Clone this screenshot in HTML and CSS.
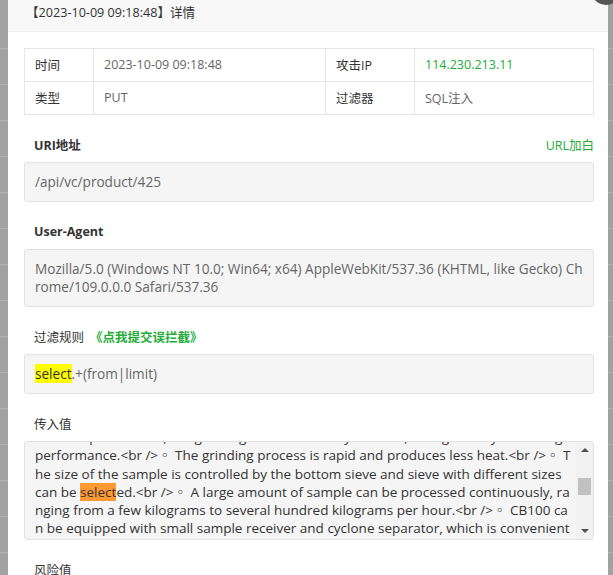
FILE: index.html
```html
<!DOCTYPE html>
<html lang="zh-CN">
<head>
    <meta charset="UTF-8">
    <title>拦截详情</title>
    <link rel="stylesheet" href="styles.css">
</head>
<body>
    <div class="layer">
        <span class="layer-close"></span>
        <div class="layer-title">【2023-10-09 09:18:48】详情</div>
        <div class="layer-content">
            <table class="info-table">
                <colgroup>
                    <col class="c1">
                    <col class="c2">
                    <col class="c3">
                    <col>
                </colgroup>
                <tr>
                    <td class="label">时间</td>
                    <td>2023-10-09 09:18:48</td>
                    <td class="label">攻击IP</td>
                    <td class="green">114.230.213.11</td>
                </tr>
                <tr>
                    <td class="label">类型</td>
                    <td>PUT</td>
                    <td class="label">过滤器</td>
                    <td>SQL注入</td>
                </tr>
            </table>

            <div class="field">
                <div class="field-label">
                    <b>URI地址</b>
                    <a class="green" href="#">URL加白</a>
                </div>
                <div class="field-box">/api/vc/product/425</div>
            </div>

            <div class="field">
                <div class="field-label"><b>User-Agent</b></div>
                <div class="field-box">Mozilla/5.0 (Windows NT 10.0; Win64; x64) AppleWebKit/537.36 (KHTML, like Gecko) Chrome/109.0.0.0 Safari/537.36</div>
            </div>

            <div class="field">
                <div class="field-label">
                    <span>过滤规则</span>
                    <a class="green strong" href="#">《点我提交误拦截》</a>
                </div>
                <div class="field-box"><span class="hl-yellow">select</span>.+(from|limit)</div>
            </div>

            <div class="field">
                <div class="field-label"><span>传入值</span></div>
                <div class="field-box scroll-box">
                    <div class="scroll-view">
                        <div class="scroll-text">
                            <div>uniform particle size, the grinding chamber is easy to clean, with good dry and wet grinding qualit</div>
                            <div>performance.&lt;br /&gt;◦ The grinding process is rapid and produces less heat.&lt;br /&gt;◦ T</div>
                            <div>he size of the sample is controlled by the bottom sieve and sieve with different sizes</div>
                            <div>can be <span class="hl-orange">select</span>ed.&lt;br /&gt;◦ A large amount of sample can be processed continuously, ra</div>
                            <div>nging from a few kilograms to several hundred kilograms per hour.&lt;br /&gt;◦ CB100 ca</div>
                            <div>n be equipped with small sample receiver and cyclone separator, which is convenient</div>
                            <div>for collecting the sample.</div>
                        </div>
                    </div>
                    <div class="scrollbar">
                        <span class="arrow-up"></span>
                        <span class="thumb"></span>
                        <span class="arrow-down"></span>
                    </div>
                </div>
            </div>

            <div class="field">
                <div class="field-label"><span>风险值</span></div>
                <div class="field-box">0</div>
            </div>
        </div>
    </div>
</body>
</html>
```

FILE: styles.css
```css
body {
    margin: 0;
    height: 575px;
    overflow: hidden;
    font-family: "Open Sans", "Noto Sans CJK SC", sans-serif;
    color: #333;
    background-color: #a2a2a2;
    background-image: repeating-linear-gradient(to bottom, transparent 0, transparent 35px, #b4b4b4 35px, #b4b4b4 36px);
    background-position: 0 13px;
}
.layer {
    position: relative;
    margin-left: 8px;
    width: 600px;
    min-height: 100%;
    background-color: #fff;
}
.layer-close {
    position: absolute;
    left: 583px;
    top: -25px;
    width: 30px;
    height: 30px;
    border-radius: 50%;
    background-color: #555;
}
.layer-title {
    height: 31px;
    line-height: 25px;
    padding-left: 18px;
    font-size: 12.6px;
    background-color: #f8f8f8;
    border-bottom: 1px solid #eee;
}
.layer-content {
    padding: 16px 14px 0 16px;
}
.info-table {
    width: 570px;
    border-collapse: collapse;
    table-layout: fixed;
    font-size: 12.5px;
}
.info-table .c1 {
    width: 69px;
}
.info-table .c2 {
    width: 232px;
}
.info-table .c3 {
    width: 89px;
}
.info-table td {
    height: 30px;
    padding: 0 10px 2px;
    border: 1px solid #e6e6e6;
    color: #666;
}
.info-table td.label {
    color: #333;
}
.info-table td.green, .green {
    color: #22ac38;
}
a {
    text-decoration: none;
}
.field {
    width: 570px;
    margin-top: 19px;
}
.field-label {
    display: flex;
    justify-content: space-between;
    align-items: center;
    height: 20px;
    padding-left: 10px;
    margin-bottom: 8px;
    font-size: 12.5px;
}
.field-label span {
    margin-right: 6px;
}
.field-label .green {
    margin-right: auto;
}
.field-label b + .green {
    margin-right: 0;
}
.field-label .strong {
    font-weight: bold;
}
.field-box {
    padding: 10px;
    line-height: 18px;
    font-size: 13.6px;
    color: #666;
    background-color: #f5f5f5;
    border: 1px solid #e2e2e2;
    border-radius: 3px;
    word-break: break-all;
}
.hl-yellow {
    color: #333;
    background-color: #ffff00;
}
.hl-orange {
    color: #333;
    background-color: #ff9933;
}
.scroll-box {
    display: flex;
    height: 97px;
    padding: 0 0 0 10px;
    overflow: hidden;
}
.scroll-view {
    flex: 1;
    overflow: hidden;
    padding-right: 4px;
}
.scroll-text {
    margin-top: -14px;
    line-height: 18.3px;
    font-size: 13.5px;
    color: #333;
    white-space: nowrap;
}
.scrollbar {
    position: relative;
    width: 17px;
    background-color: #f1f1f1;
}
.arrow-up, .arrow-down {
    position: absolute;
    left: 5px;
    width: 0;
    height: 0;
    border-left: 4px solid transparent;
    border-right: 4px solid transparent;
}
.arrow-up {
    top: 6px;
    border-bottom: 4px solid #505050;
}
.arrow-down {
    bottom: 6px;
    border-top: 4px solid #505050;
}
.thumb {
    position: absolute;
    left: 2px;
    right: 2px;
    top: 36px;
    height: 17px;
    background-color: #c1c1c1;
}
```
